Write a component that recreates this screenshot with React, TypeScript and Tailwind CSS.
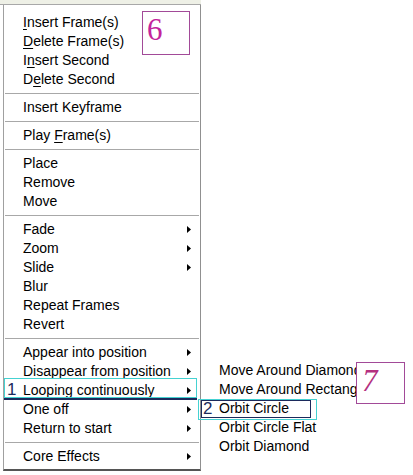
import type { ReactNode } from "react";

type Item = { label: ReactNode; sub?: boolean } | "sep";

const u = (s: string) => <span className="underline underline-offset-2">{s}</span>;

const items: Item[] = [
  { label: <>{u("I")}nsert Frame(s)</> },
  { label: <>{u("D")}elete Frame(s)</> },
  { label: <>I{u("n")}sert Second</> },
  { label: <>D{u("e")}lete Second</> },
  "sep",
  { label: "Insert Keyframe" },
  "sep",
  { label: <>Play {u("F")}rame(s)</> },
  "sep",
  { label: "Place" },
  { label: "Remove" },
  { label: "Move" },
  "sep",
  { label: "Fade", sub: true },
  { label: "Zoom", sub: true },
  { label: "Slide", sub: true },
  { label: "Blur" },
  { label: "Repeat Frames" },
  { label: "Revert" },
  "sep",
  { label: "Appear into position", sub: true },
  { label: "Disappear from position", sub: true },
  { label: "Looping continuously", sub: true },
  { label: "One off", sub: true },
  { label: "Return to start", sub: true },
  "sep",
  { label: "Core Effects", sub: true },
];

const subItems = [
  "Move Around Diamond",
  "Move Around Rectangle",
  "Orbit Circle",
  "Orbit Circle Flat",
  "Orbit Diamond",
];

const Arrow = () => (
  <svg width="4" height="7" viewBox="0 0 4 7" className="absolute left-[183px] top-[6px]">
    <path d="M0 0 L4 3.5 L0 7 Z" fill="#000" />
  </svg>
);

export default function App() {
  return (
    <div className="relative w-[413px] h-[475px] bg-white overflow-hidden font-['Liberation_Sans',Arial,sans-serif] text-[14px] text-black">
      <div className="w-[201px] h-[5px] bg-[#eef0e6] border-b border-[#a8a8a8]" />

      <div className="flex items-start">
        <div className="ml-[3px] w-[198px] h-[466px] border-l border-r border-b-2 border-l-[#a0a0a0] border-r-[#909090] border-b-[#555] pt-[8px] flex flex-col">
          {items.map((it, i) =>
            it === "sep" ? (
              <div key={i} className="h-[9px] flex items-center px-[1px]">
                <div className="w-full h-px bg-[#a8a8a8]" />
              </div>
            ) : (
              <div key={i} className="relative h-[19px] leading-[19px] pl-[19px] whitespace-nowrap">
                {it.label}
                {it.sub && <Arrow />}
              </div>
            )
          )}
        </div>

        <div className="mt-[356px] ml-[18px] w-[137px] overflow-hidden flex flex-col">
          {subItems.map((s) => (
            <div key={s} className="h-[19px] leading-[19px] whitespace-nowrap">
              {s}
            </div>
          ))}
        </div>
      </div>

      {/* annotation 6 */}
      <div className="absolute left-[142px] top-[11px] w-[48px] h-[44px] border border-[#a24a98] bg-white flex items-start pl-[4px]">
        <span className="font-['Liberation_Serif',serif] text-[31px] leading-[36px] text-[#c3249c]">6</span>
      </div>

      {/* highlight 1 */}
      <div className="absolute left-[4px] top-[378px] w-[193px] h-[22px] border-b-2 border-l border-[#1c2a5c]" />
      <div className="absolute left-[4px] top-[378px] w-[193px] h-[20px] border border-[#45d2d2]" />
      <div className="absolute left-[7px] top-[381px] text-[17px] leading-[18px] text-[#1c2a5c]">1</div>

      {/* highlight 2 */}
      <div className="absolute left-[198px] top-[399px] w-[119px] h-[21px] border border-[#45d2d2]" />
      <div className="absolute left-[201px] top-[400px] w-[110px] h-[18px] border border-[#1c2a5c]" />
      <div className="absolute left-[203px] top-[400px] text-[17px] leading-[18px] text-[#1c2a5c]">2</div>

      {/* annotation 7 */}
      <div className="absolute left-[356px] top-[362px] w-[49px] h-[42px] border border-[#a24a98] bg-white pl-[5px]">
        <span className="font-['Liberation_Serif',serif] italic text-[31px] leading-[36px] text-[#b4307f]">7</span>
      </div>
    </div>
  );
}
